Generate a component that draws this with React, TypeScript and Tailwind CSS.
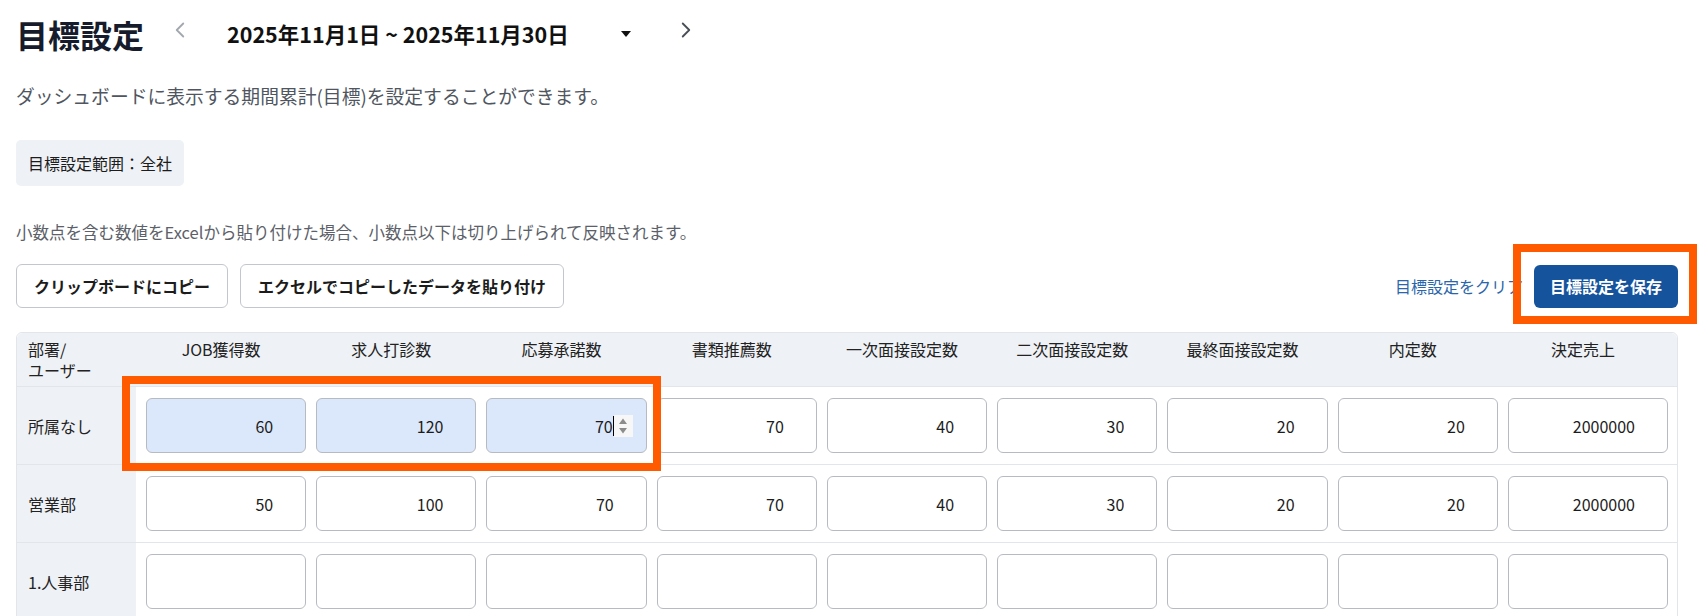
import React from 'react';
import { ChevronLeft, ChevronRight } from 'lucide-react';

const COLUMNS = [
  'JOB獲得数',
  '求人打診数',
  '応募承諾数',
  '書類推薦数',
  '一次面接設定数',
  '二次面接設定数',
  '最終面接設定数',
  '内定数',
  '決定売上',
];

type Row = { name: string; values: string[]; highlight?: boolean };

const ROWS: Row[] = [
  { name: '所属なし', values: ['60', '120', '70', '70', '40', '30', '20', '20', '2000000'], highlight: true },
  { name: '営業部', values: ['50', '100', '70', '70', '40', '30', '20', '20', '2000000'] },
  { name: '1.人事部', values: ['', '', '', '', '', '', '', '', ''] },
];

function Spinner() {
  return (
    <svg width="12" height="20" viewBox="0 0 12 20">
      <path d="M6 2.5 L10 8 H2 Z" fill="#8c8c8c" />
      <path d="M6 17.5 L10 12 H2 Z" fill="#8c8c8c" />
    </svg>
  );
}

function TargetInput({ value, blue, focused }: { value: string; blue: boolean; focused: boolean }) {
  const bg = blue ? 'bg-[#dbe8fb]' : 'bg-white';
  if (focused) {
    return (
      <div className={`flex h-[55px] w-full items-center justify-end rounded-[6px] border border-[#b7bbc1] pr-[13px] text-[16px] text-[#1c1c1c] ${bg}`}>
        <span>{value}</span>
        <span className="h-[20px] w-px bg-black" />
        <span className="flex h-[22px] w-[19px] items-center justify-center bg-[#f7f7f7]">
          <Spinner />
        </span>
      </div>
    );
  }
  return (
    <input
      type="text"
      readOnly
      value={value}
      className={`h-[55px] w-full rounded-[6px] border border-[#b7bbc1] pr-[32px] text-right text-[16px] text-[#1c1c1c] outline-none ${bg}`}
    />
  );
}

function TargetTable() {
  return (
    <div className="relative mt-[24px] rounded-t-[6px] border border-[#e2e5e9]">
      <div className="grid h-[53px] grid-cols-[119px_repeat(9,minmax(0,1fr))] rounded-t-[6px] bg-[#eef1f5] pr-[9px] text-[16px] leading-[21px] text-[#222]">
        <div className="pl-[11px] pt-[6px]">
          <div>部署/</div>
          <div>ユーザー</div>
        </div>
        {COLUMNS.map((col) => (
          <div key={col} className="pt-[6px] text-center">{col}</div>
        ))}
      </div>
      {ROWS.map((row) => (
        <div
          key={row.name}
          className="grid h-[78px] grid-cols-[119px_repeat(9,minmax(0,1fr))] border-t border-[#e2e5e9] pr-[9px]">
          <div className="flex items-center bg-[#eef1f5] pl-[11px] text-[16px] text-[#222]">{row.name}</div>
          {row.values.map((v, i) => (
            <div key={i} className="flex items-center pl-[10px]">
              <TargetInput value={v} blue={!!row.highlight && i < 3} focused={!!row.highlight && i === 2} />
            </div>
          ))}
        </div>
      ))}
      <div className="pointer-events-none absolute left-[105px] top-[43px] h-[95px] w-[539px] border-[8px] border-[#ff5a00]" />
    </div>
  );
}

export default function App() {
  return (
    <div className="h-[616px] w-[1698px] overflow-hidden bg-white pl-[16px] pr-[20px] pt-[10px] font-['Noto_Sans_CJK_JP','Noto_Sans',sans-serif] text-[#1c1c1c]">
      <div className="flex h-[48px] items-center">
        <h1 className="text-[32px] font-bold leading-[48px] text-[#161c2b]">目標設定</h1>
        <button className="mb-[8px] ml-[23px] text-[#a3a8af]">
          <ChevronLeft size={26} strokeWidth={1.7} />
        </button>
        <div className="ml-[34px] flex items-center">
          <span className="text-[21.5px] font-bold text-[#111]">2025年11月1日 ~ 2025年11月30日</span>
          <svg className="ml-[52px]" width="10" height="6" viewBox="0 0 10 6">
            <path d="M0 0 H10 L5 6 Z" fill="#111" />
          </svg>
        </div>
        <button className="mb-[8px] ml-[42px] text-[#4a4f57]">
          <ChevronRight size={26} strokeWidth={1.7} />
        </button>
      </div>

      <p className="mt-[24px] text-[18.8px] leading-[27px] text-[#50565f]">
        ダッシュボードに表示する期間累計(目標)を設定することができます。
      </p>

      <div className="mt-[31px] inline-flex h-[46px] items-center rounded-[5px] bg-[#eef1f5] px-[12px] text-[16px] text-[#1c1c1c]">
        目標設定範囲：全社
      </div>

      <p className="mt-[34px] text-[16.5px] leading-[24px] text-[#5c6169]">
        小数点を含む数値をExcelから貼り付けた場合、小数点以下は切り上げられて反映されます。
      </p>

      <div className="mt-[20px] flex items-center justify-between">
        <div className="flex gap-[12px]">
          <button className="h-[44px] rounded-[6px] border border-[#c3c7cd] bg-white px-[17px] text-[16px] font-semibold text-[#1c1c1c]">
            クリップボードにコピー
          </button>
          <button className="h-[44px] rounded-[6px] border border-[#c3c7cd] bg-white px-[17px] text-[16px] font-semibold text-[#1c1c1c]">
            エクセルでコピーしたデータを貼り付け
          </button>
        </div>
        <div className="flex items-center gap-[11px]">
          <a className="text-[16px] text-[#2b66aa]">目標設定をクリア</a>
          <div className="relative">
            <button className="h-[43px] rounded-[6px] bg-[#15539d] px-[16px] text-[16px] font-bold text-white">
              目標設定を保存
            </button>
            <div className="pointer-events-none absolute -left-[21px] -top-[21px] h-[80px] w-[184px] border-[8px] border-[#ff5a00]" />
          </div>
        </div>
      </div>

      <TargetTable />
    </div>
  );
}
